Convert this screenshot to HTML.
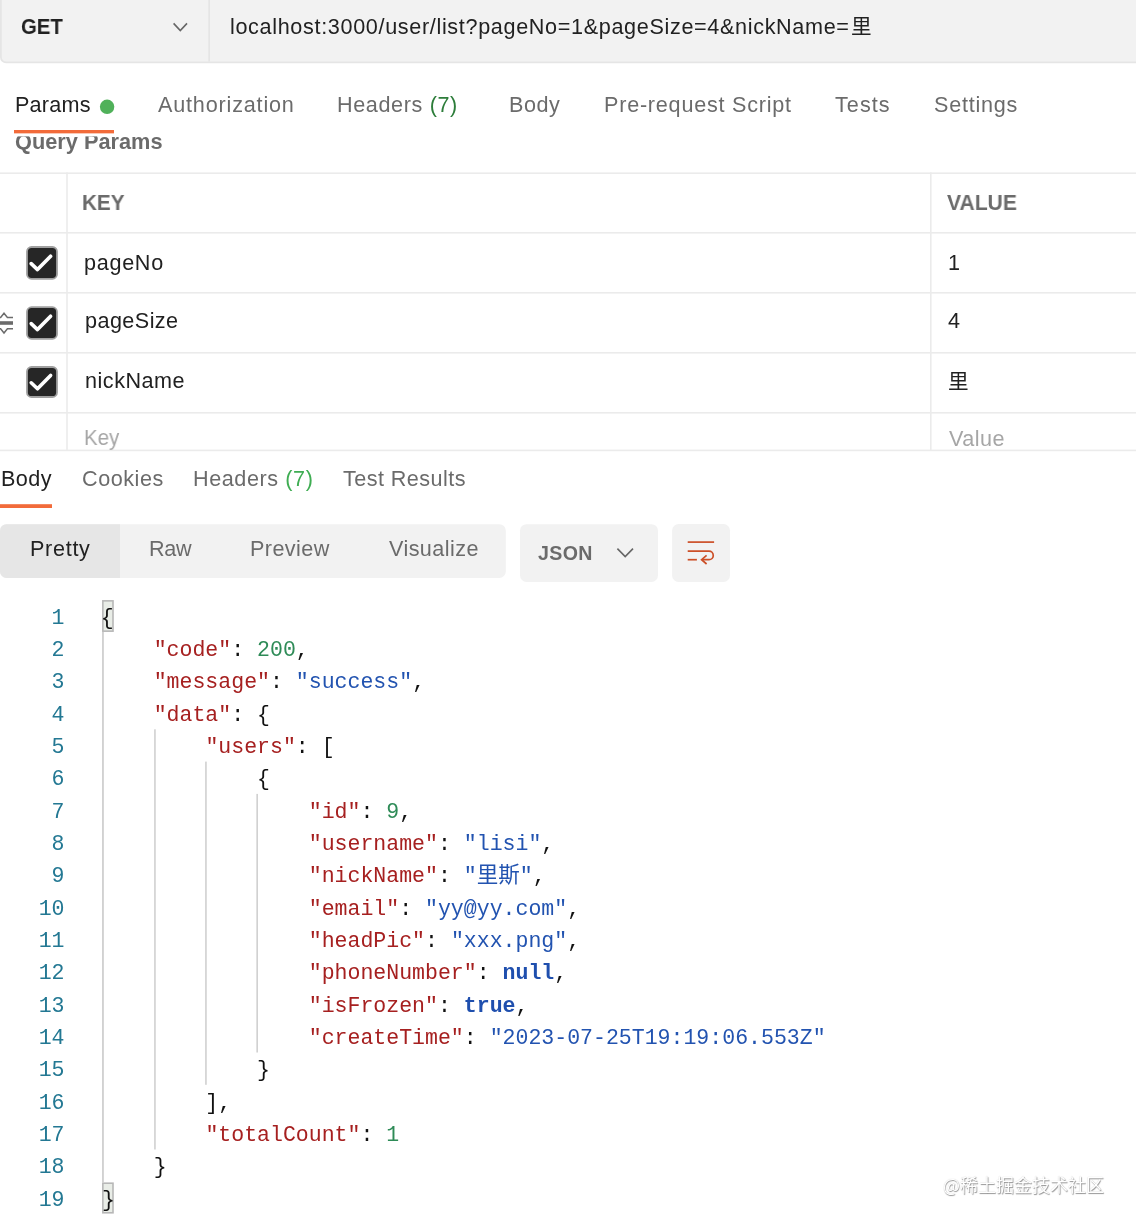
<!DOCTYPE html>
<html lang="en">
<head>
<meta charset="utf-8">
<title>Postman - user list</title>
<style>
*{box-sizing:border-box;margin:0;padding:0}
html,body{width:1136px;height:1228px;background:#fff;overflow:hidden}
body{position:relative;font-family:"Liberation Sans","Noto Sans CJK SC",sans-serif;color:#212121}
.t{position:absolute;white-space:nowrap;line-height:1;font-size:21.6px;will-change:transform}
.b{font-weight:700}
.g{color:#6b6b6b}
.gr{color:#2d7d3a}
.gr2{color:#3fad53}
.ph{color:#a6a6a6}
.cj{font-family:"Noto Sans CJK SC","Liberation Sans",sans-serif}
.box{position:absolute}
svg{position:absolute;left:0;top:0;overflow:visible}
.code{position:absolute;left:0;top:600px;width:1136px;font-family:"Liberation Mono","Noto Sans CJK SC",monospace;font-size:21.54px;will-change:transform}
.ln{position:absolute;left:0;width:64.5px;text-align:right;color:#237893;white-space:pre;line-height:1}
.cl{position:absolute;left:102px;white-space:pre;line-height:1;color:#111}
.k{color:#a62020}
.s{color:#2253b0}
.n{color:#2e8b57}
.kw{color:#1f4fae;font-weight:700}
.br{position:relative;left:-1.2px}
</style>
</head>
<body>

<!-- URL bar -->
<svg width="1136" height="1228" viewBox="0 0 1136 1228">
 <path d="M0.9 -5 V57.2 A5.2 5.2 0 0 0 6.1 62.4 H1142 V-5 Z" fill="#f2f2f2" stroke="#e5e5e5" stroke-width="1.8"/>
 <rect x="208.3" y="0" width="1.7" height="61.6" fill="#e5e5e5"/>
 <path d="M173.6 23.4 L180.3 30.6 L187 23.4" fill="none" stroke="#666" stroke-width="1.6"/>
 <!-- table lines -->
 <g fill="#ebebeb">
  <rect x="0" y="172.4" width="1136" height="1.6"/>
  <rect x="0" y="232" width="1136" height="1.6"/>
  <rect x="0" y="292" width="1136" height="1.6"/>
  <rect x="0" y="352" width="1136" height="1.6"/>
  <rect x="0" y="412" width="1136" height="1.6"/>
  <rect x="0" y="449.6" width="1136" height="1.6"/>
  <rect x="66.2" y="172.4" width="1.6" height="278"/>
  <rect x="930" y="172.4" width="1.6" height="278"/>
 </g>
 <!-- checkboxes -->
 <g id="cbs">
  <rect x="27" y="247" width="30" height="31.8" rx="4.6" fill="#262626" stroke="#a0a0a0" stroke-width="1.8"/>
  <path d="M31.2 263.6 L37.5 269.6 L50.6 256.2" fill="none" stroke="#fff" stroke-width="3.6" stroke-linecap="round" stroke-linejoin="round"/>
  <rect x="27" y="307.2" width="30" height="31.6" rx="4.6" fill="#262626" stroke="#a0a0a0" stroke-width="1.8"/>
  <path d="M31.2 323.6 L37.5 329.6 L50.6 316.2" fill="none" stroke="#fff" stroke-width="3.6" stroke-linecap="round" stroke-linejoin="round"/>
  <rect x="27" y="367" width="30" height="30" rx="4.6" fill="#262626" stroke="#a0a0a0" stroke-width="1.8"/>
  <path d="M31.2 382.8 L37.5 388.8 L50.6 375.4" fill="none" stroke="#fff" stroke-width="3.6" stroke-linecap="round" stroke-linejoin="round"/>
 </g>
 <!-- drag handle -->
 <g fill="none" stroke="#6b6b6b">
  <path d="M-1 317.4 L0.6 317.4 L4 313.2 L7.4 317.4 L13 317.4" stroke-width="1.5"/>
  <path d="M-1 323 H13" stroke-width="3.6"/>
  <path d="M-1 328.8 L0.6 328.8 L4 333 L7.4 328.8 L13 328.8" stroke-width="1.5"/>
 </g>
 <!-- tab indicators -->
 <circle cx="107.1" cy="106.8" r="7.2" fill="#50b15a"/>
 <rect x="14" y="130" width="100" height="3.6" fill="#f26b3a"/>
 <rect x="0" y="504.2" width="52" height="3.8" fill="#f26b3a"/>
 <!-- view switch -->
 <rect x="0" y="524.2" width="505.8" height="53.8" rx="6.5" fill="#f2f2f2"/>
 <path d="M6.5 524.2 H120 V578 H6.5 A6.5 6.5 0 0 1 0 571.5 V530.7 A6.5 6.5 0 0 1 6.5 524.2 Z" fill="#e6e6e6"/>
 <rect x="520" y="524.2" width="138" height="57.8" rx="6.5" fill="#f2f2f2"/>
 <path d="M617.4 548.6 L625.2 556.6 L633 548.6" fill="none" stroke="#666" stroke-width="1.6"/>
 <rect x="672.1" y="524" width="57.9" height="57.9" rx="6.5" fill="#f2f2f2"/>
 <g fill="none" stroke="#cc4f27" stroke-width="1.7">
  <path d="M687.7 542.1 H714.1"/>
  <path d="M687.7 551.2 H709 A4.25 4.25 0 0 1 709 559.7 H702"/>
  <path d="M687.7 559.7 H696.9"/>
  <path d="M706.6 555.4 L701.6 559.7 L706.6 564"/>
 </g>
 <!-- bracket match boxes -->
 <g fill="#e9ede7" stroke="#b7b7b7" stroke-width="1.6">
  <rect x="102.85" y="600.85" width="10.15" height="30.3"/>
  <rect x="102.85" y="1183.2" width="10.15" height="29.6"/>
 </g>
 <!-- indent guides -->
 <g fill="#cdcdcd">
  <rect x="102.1" y="632" width="1.7" height="550.5"/>
  <rect x="154.2" y="729.3" width="1.5" height="420.2"/>
  <rect x="205.2" y="761.6" width="1.5" height="323.2"/>
  <rect x="256.4" y="793.9" width="1.5" height="258.6"/>
 </g>
</svg>

<div class="t b" id="get" style="left:21.04px;top:16.32px;transform:scaleX(0.9424);transform-origin:0 0">GET</div>
<div class="t" id="url" style="left:229.98px;top:16.12px;letter-spacing:0.659px">localhost:3000/user/list?pageNo=1&amp;pageSize=4&amp;nickName=<span class="cj" style="font-size:20.6px;line-height:0;margin-left:1.4px">里</span></div>
<div class="t" id="params" style="left:15.16px;top:94.07px;letter-spacing:0.217px">Params</div>
<div class="t g" id="auth" style="left:158.12px;top:94.07px;letter-spacing:0.817px">Authorization</div>
<div class="t g" id="hdr1" style="left:337.28px;top:94.07px;letter-spacing:0.624px">Headers <span class="gr">(7)</span></div>
<div class="t g" id="body1" style="left:509.37px;top:94.07px;letter-spacing:0.542px">Body</div>
<div class="t g" id="prs" style="left:604.15px;top:94.07px;letter-spacing:0.768px">Pre-request Script</div>
<div class="t g" id="tests" style="left:835.19px;top:94.07px;letter-spacing:1.042px">Tests</div>
<div class="t g" id="settings" style="left:933.63px;top:94.07px;letter-spacing:0.762px">Settings</div>
<div class="t b g" id="qp" style="left:15.30px;top:131.02px;transform:scaleX(1.0071);transform-origin:0 0">Query Params</div>
<div class="t b g" id="key" style="left:81.55px;top:192.32px;transform:scaleX(0.9585);transform-origin:0 0">KEY</div>
<div class="t b g" id="value" style="left:947.39px;top:192.32px;transform:scaleX(0.9761);transform-origin:0 0">VALUE</div>
<div class="t" id="pageno" style="left:83.50px;top:252.07px;letter-spacing:0.707px">pageNo</div>
<div class="t" id="pagesize" style="left:84.72px;top:309.82px;letter-spacing:0.439px">pageSize</div>
<div class="t" id="nickname" style="left:84.94px;top:369.82px;letter-spacing:0.511px">nickName</div>
<div class="t ph" id="keyph" style="left:84.44px;top:427.32px;transform:scaleX(0.9456);transform-origin:0 0">Key</div>
<div class="t" id="v1" style="left:947.63px;top:252.12px">1</div>
<div class="t" id="v4" style="left:948.14px;top:310.32px">4</div>
<div class="t ph" id="valueph" style="left:948.93px;top:427.82px;letter-spacing:0.488px">Value</div>
<div class="t" id="body2" style="left:1.36px;top:468.07px;letter-spacing:0.413px">Body</div>
<div class="t g" id="cookies" style="left:81.62px;top:468.07px;letter-spacing:0.542px">Cookies</div>
<div class="t g" id="hdr2" style="left:193.38px;top:468.07px;letter-spacing:0.586px">Headers <span class="gr2">(7)</span></div>
<div class="t g" id="testres" style="left:343.22px;top:468.07px;letter-spacing:0.441px">Test Results</div>
<div class="t" id="pretty" style="left:30.11px;top:538.07px;letter-spacing:0.700px">Pretty</div>
<div class="t g" id="raw" style="left:148.85px;top:538.07px;letter-spacing:-0.260px">Raw</div>
<div class="t g" id="preview" style="left:250.18px;top:538.07px;letter-spacing:0.420px">Preview</div>
<div class="t g" id="visualize" style="left:388.87px;top:538.07px;letter-spacing:0.420px">Visualize</div>
<div class="t b g" id="json" style="left:538.34px;top:543.51px;font-size:19.6px;letter-spacing:0.351px">JSON</div>
<svg width="1136" height="140" viewBox="0 0 1136 140"><rect x="0" y="133.6" width="400" height="2.8" fill="#fff"/></svg>
<div class="t cj" id="vli" style="left:948px;top:370px;font-size:20.6px">里</div>

<!-- code -->
<div class="code" id="code">
<div class="ln" style="top:7.7px">1</div>
<div class="cl" style="top:7.7px"><span class="br">{</span></div>
<div class="ln" style="top:40.0px">2</div>
<div class="cl" style="top:40.0px">    <span class="k">"code"</span>: <span class="n">200</span>,</div>
<div class="ln" style="top:72.3px">3</div>
<div class="cl" style="top:72.3px">    <span class="k">"message"</span>: <span class="s">"success"</span>,</div>
<div class="ln" style="top:104.7px">4</div>
<div class="cl" style="top:104.7px">    <span class="k">"data"</span>: {</div>
<div class="ln" style="top:137.0px">5</div>
<div class="cl" style="top:137.0px">        <span class="k">"users"</span>: [</div>
<div class="ln" style="top:169.3px">6</div>
<div class="cl" style="top:169.3px">            {</div>
<div class="ln" style="top:201.6px">7</div>
<div class="cl" style="top:201.6px">                <span class="k">"id"</span>: <span class="n">9</span>,</div>
<div class="ln" style="top:233.9px">8</div>
<div class="cl" style="top:233.9px">                <span class="k">"username"</span>: <span class="s">"lisi"</span>,</div>
<div class="ln" style="top:266.3px">9</div>
<div class="cl" style="top:266.3px">                <span class="k">"nickName"</span>: <span class="s">"里斯"</span>,</div>
<div class="ln" style="top:298.6px">10</div>
<div class="cl" style="top:298.6px">                <span class="k">"email"</span>: <span class="s">"yy@yy.com"</span>,</div>
<div class="ln" style="top:330.9px">11</div>
<div class="cl" style="top:330.9px">                <span class="k">"headPic"</span>: <span class="s">"xxx.png"</span>,</div>
<div class="ln" style="top:363.2px">12</div>
<div class="cl" style="top:363.2px">                <span class="k">"phoneNumber"</span>: <span class="kw">null</span>,</div>
<div class="ln" style="top:395.5px">13</div>
<div class="cl" style="top:395.5px">                <span class="k">"isFrozen"</span>: <span class="kw">true</span>,</div>
<div class="ln" style="top:427.9px">14</div>
<div class="cl" style="top:427.9px">                <span class="k">"createTime"</span>: <span class="s">"2023-07-25T19:19:06.553Z"</span></div>
<div class="ln" style="top:460.2px">15</div>
<div class="cl" style="top:460.2px">            }</div>
<div class="ln" style="top:492.5px">16</div>
<div class="cl" style="top:492.5px">        ],</div>
<div class="ln" style="top:524.8px">17</div>
<div class="cl" style="top:524.8px">        <span class="k">"totalCount"</span>: <span class="n">1</span></div>
<div class="ln" style="top:557.1px">18</div>
<div class="cl" style="top:557.1px">    }</div>
<div class="ln" style="top:589.5px">19</div>
<div class="cl" style="top:589.5px">}</div>
</div>

<div class="t cj" id="wm" style="left:943px;top:1175.4px;font-size:18px;color:#fff;text-shadow:.6px .6px 1px rgba(0,0,0,.42),0 0 1px rgba(0,0,0,.22)">@稀土掘金技术社区</div>

</body>
</html>
